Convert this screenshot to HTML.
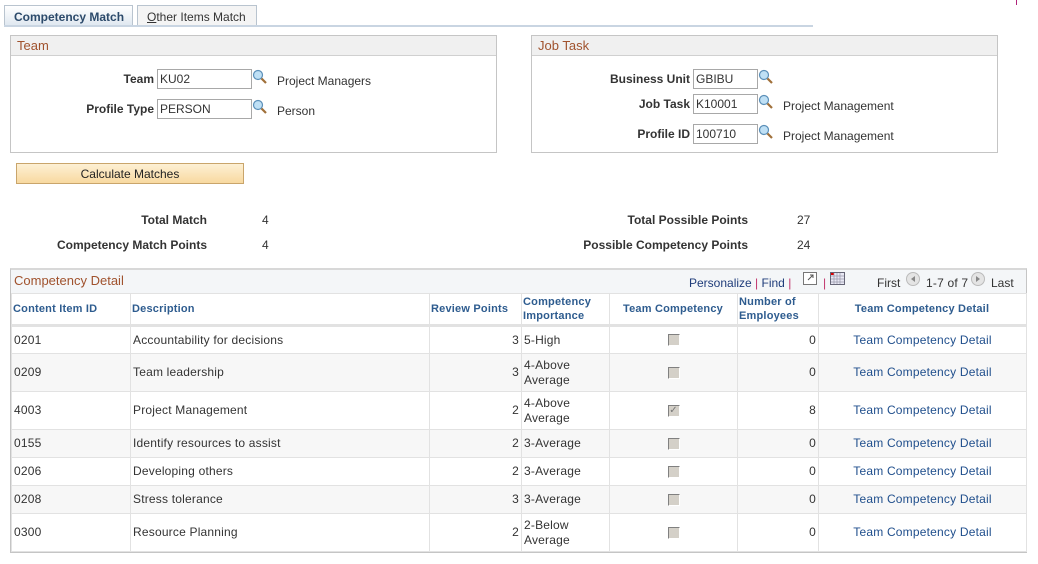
<!DOCTYPE html>
<html><head><meta charset="utf-8"><style>
*{margin:0;padding:0;box-sizing:border-box}
body{width:1038px;height:564px;background:#fff;font-family:"Liberation Sans",Arial,sans-serif;font-size:12px;color:#333;position:relative;overflow:hidden}
.a{position:absolute;white-space:nowrap}
.lbl{font-weight:bold;color:#333;text-align:right}
.box{position:absolute;border:1px solid #c5c5c5;background:#fff}
.hd{position:absolute;left:0;right:0;top:0;height:20px;background:#f0f0f0;border-bottom:1px solid #d0d0d0;color:#a0522d;font-size:13px;padding:2px 0 0 6px}
.inp{position:absolute;border:1px solid #a8a8a8;height:20px;width:95px;padding:2px 2px;font-size:12px;color:#333;background:#fff}
.ic{position:absolute;width:16px;height:16px}
.blue{color:#1f4e8c}
table{border-collapse:collapse;position:absolute;left:11px;top:293px;width:1015px;table-layout:fixed;letter-spacing:0.2px}
td,th{border:1px solid #e2e2e2;padding:0 2px;font-weight:normal;font-size:12px;vertical-align:middle}
th{color:#2e5c8f;font-weight:bold;text-align:left;height:32px;background:#fff;border-bottom:3px solid #e2e2e2;line-height:14px;font-size:11px;padding-left:1px}
tr.g td{background:#f7f7f7}
.cb{display:inline-block;width:12px;height:12px;background:#d4d0c8;border-top:1px solid #808080;border-left:1px solid #808080;border-right:1px solid #fff;border-bottom:1px solid #fff;vertical-align:middle}
.r{text-align:right}.c{text-align:center}
td{line-height:15px}
</style></head><body>
<div class="a" style="left:4px;top:5px;width:129px;height:22px;background:linear-gradient(#fff,#dde6ef);border:1px solid #b9c4cf;border-bottom:none;font-weight:bold;color:#2c4a6b;padding:4px 0 0 9px">Competency Match</div>
<div class="a" style="left:137px;top:5px;width:120px;height:21px;background:#f4f4f4;border:1px solid #b9c4cf;color:#333;padding:4px 0 0 9px"><u>O</u>ther Items Match</div>
<div class="a" style="left:4px;top:25px;width:809px;height:2px;background:#c9d5e2"></div>
<div class="a" style="left:1016px;top:0;width:1px;height:5px;background:#b0247a"></div>

<div class="box" style="left:10px;top:35px;width:487px;height:118px"><div class="hd">Team</div></div>
<div class="a lbl" style="left:60px;top:72px;width:94px">Team</div>
<div class="inp" style="left:157px;top:69px">KU02</div>
<svg class="ic" style="left:252px;top:69px" viewBox="0 0 16 16"><circle cx="6" cy="6" r="4.5" fill="#bfe0f5" stroke="#5b8fb8" stroke-width="1.2"/><line x1="9.5" y1="9.5" x2="14" y2="14" stroke="#a0703a" stroke-width="2.2"/></svg>
<div class="a" style="left:277px;top:74px">Project Managers</div>
<div class="a lbl" style="left:40px;top:102px;width:114px">Profile Type</div>
<div class="inp" style="left:157px;top:99px">PERSON</div>
<svg class="ic" style="left:252px;top:99px" viewBox="0 0 16 16"><circle cx="6" cy="6" r="4.5" fill="#bfe0f5" stroke="#5b8fb8" stroke-width="1.2"/><line x1="9.5" y1="9.5" x2="14" y2="14" stroke="#a0703a" stroke-width="2.2"/></svg>
<div class="a" style="left:277px;top:104px">Person</div>

<div class="box" style="left:531px;top:35px;width:467px;height:118px"><div class="hd">Job Task</div></div>
<div class="a lbl" style="left:590px;top:72px;width:100px">Business Unit</div>
<div class="inp" style="left:693px;top:69px;width:65px">GBIBU</div>
<svg class="ic" style="left:758px;top:69px" viewBox="0 0 16 16"><circle cx="6" cy="6" r="4.5" fill="#bfe0f5" stroke="#5b8fb8" stroke-width="1.2"/><line x1="9.5" y1="9.5" x2="14" y2="14" stroke="#a0703a" stroke-width="2.2"/></svg>
<div class="a lbl" style="left:590px;top:97px;width:100px">Job Task</div>
<div class="inp" style="left:693px;top:94px;width:65px">K10001</div>
<svg class="ic" style="left:758px;top:94px" viewBox="0 0 16 16"><circle cx="6" cy="6" r="4.5" fill="#bfe0f5" stroke="#5b8fb8" stroke-width="1.2"/><line x1="9.5" y1="9.5" x2="14" y2="14" stroke="#a0703a" stroke-width="2.2"/></svg>
<div class="a" style="left:783px;top:99px">Project Management</div>
<div class="a lbl" style="left:590px;top:127px;width:100px">Profile ID</div>
<div class="inp" style="left:693px;top:124px;width:65px">100710</div>
<svg class="ic" style="left:758px;top:124px" viewBox="0 0 16 16"><circle cx="6" cy="6" r="4.5" fill="#bfe0f5" stroke="#5b8fb8" stroke-width="1.2"/><line x1="9.5" y1="9.5" x2="14" y2="14" stroke="#a0703a" stroke-width="2.2"/></svg>
<div class="a" style="left:783px;top:129px">Project Management</div>

<div class="a" style="left:16px;top:163px;width:228px;height:21px;background:linear-gradient(#fdf0d4,#f8d9a0);border:1px solid #c9a56b;text-align:center;padding-top:3px;color:#222">Calculate Matches</div>

<div class="a lbl" style="left:20px;top:213px;width:187px">Total Match</div>
<div class="a" style="left:262px;top:213px">4</div>
<div class="a lbl" style="left:20px;top:238px;width:187px">Competency Match Points</div>
<div class="a" style="left:262px;top:238px">4</div>
<div class="a lbl" style="left:500px;top:213px;width:248px">Total Possible Points</div>
<div class="a" style="left:797px;top:213px">27</div>
<div class="a lbl" style="left:500px;top:238px;width:248px">Possible Competency Points</div>
<div class="a" style="left:797px;top:238px">24</div>

<div class="a" style="left:10px;top:268px;width:1017px;height:285px;border:1px solid #c5c5c5;border-top:2px solid #d8d8d8"></div>
<div class="a" style="left:11px;top:270px;width:1015px;height:23px;background:#f4f6f8"></div>
<div class="a" style="left:14px;top:273px;color:#a0522d;font-size:13px">Competency Detail</div>
<div class="a" style="left:689px;top:276px;color:#1f3c7a">Personalize <span style="color:#c0336b">|</span> Find <span style="color:#c0336b">|</span></div>
<svg class="a" style="left:803px;top:272px" width="14" height="13" viewBox="0 0 14 13"><rect x="0.5" y="0.5" width="13" height="12" fill="#fff" stroke="#777"/><path d="M5 8 L10 3 M7 3h3v3" stroke="#555" fill="none"/></svg>
<div class="a" style="left:823px;top:276px;color:#c0336b">|</div>
<svg class="a" style="left:830px;top:272px" width="15" height="13" viewBox="0 0 15 13"><rect x="0.5" y="0.5" width="14" height="12" fill="#e8e8f4" stroke="#667"/><rect x="1" y="1" width="3" height="2" fill="#d00"/><path d="M1 4h13M1 7h13M1 10h13M4 1v11M7 1v11M10 1v11" stroke="#99a" stroke-width=".7"/></svg>
<div class="a" style="left:877px;top:276px">First</div>
<svg class="a" style="left:906px;top:272px" width="14" height="14"><circle cx="7" cy="7" r="6.5" fill="#e4e4e4" stroke="#bbb"/><path d="M9 4 L5 7 L9 10Z" fill="#888"/></svg>
<div class="a" style="left:926px;top:276px;letter-spacing:0.2px">1-7 of 7</div>
<svg class="a" style="left:971px;top:272px" width="14" height="14"><circle cx="7" cy="7" r="6.5" fill="#e4e4e4" stroke="#bbb"/><path d="M5 4 L9 7 L5 10Z" fill="#888"/></svg>
<div class="a" style="left:991px;top:276px">Last</div>

<table>
<colgroup><col style="width:119px"><col style="width:299px"><col style="width:92px"><col style="width:88px"><col style="width:128px"><col style="width:81px"><col style="width:208px"></colgroup>
<tr><th>Content Item ID</th><th>Description</th><th>Review Points</th><th>Competency Importance</th><th class="c">Team Competency</th><th>Number of Employees</th><th class="c">Team Competency Detail</th></tr>
<tr style="height:28px"><td>0201</td><td>Accountability for decisions</td><td class="r">3</td><td>5-High</td><td class="c"><span class="cb"></span></td><td class="r">0</td><td class="c blue">Team Competency Detail</td></tr>
<tr class="g" style="height:38px"><td>0209</td><td>Team leadership</td><td class="r">3</td><td>4-Above Average</td><td class="c"><span class="cb"></span></td><td class="r">0</td><td class="c blue">Team Competency Detail</td></tr>
<tr style="height:38px"><td>4003</td><td>Project Management</td><td class="r">2</td><td>4-Above Average</td><td class="c"><span class="cb" style="font-size:10px;line-height:9px;color:#777;text-align:center">✓</span></td><td class="r">8</td><td class="c blue">Team Competency Detail</td></tr>
<tr class="g" style="height:28px"><td>0155</td><td>Identify resources to assist</td><td class="r">2</td><td>3-Average</td><td class="c"><span class="cb"></span></td><td class="r">0</td><td class="c blue">Team Competency Detail</td></tr>
<tr style="height:28px"><td>0206</td><td>Developing others</td><td class="r">2</td><td>3-Average</td><td class="c"><span class="cb"></span></td><td class="r">0</td><td class="c blue">Team Competency Detail</td></tr>
<tr class="g" style="height:28px"><td>0208</td><td>Stress tolerance</td><td class="r">3</td><td>3-Average</td><td class="c"><span class="cb"></span></td><td class="r">0</td><td class="c blue">Team Competency Detail</td></tr>
<tr style="height:38px"><td>0300</td><td>Resource Planning</td><td class="r">2</td><td>2-Below Average</td><td class="c"><span class="cb"></span></td><td class="r">0</td><td class="c blue">Team Competency Detail</td></tr>
</table>
</body></html>
